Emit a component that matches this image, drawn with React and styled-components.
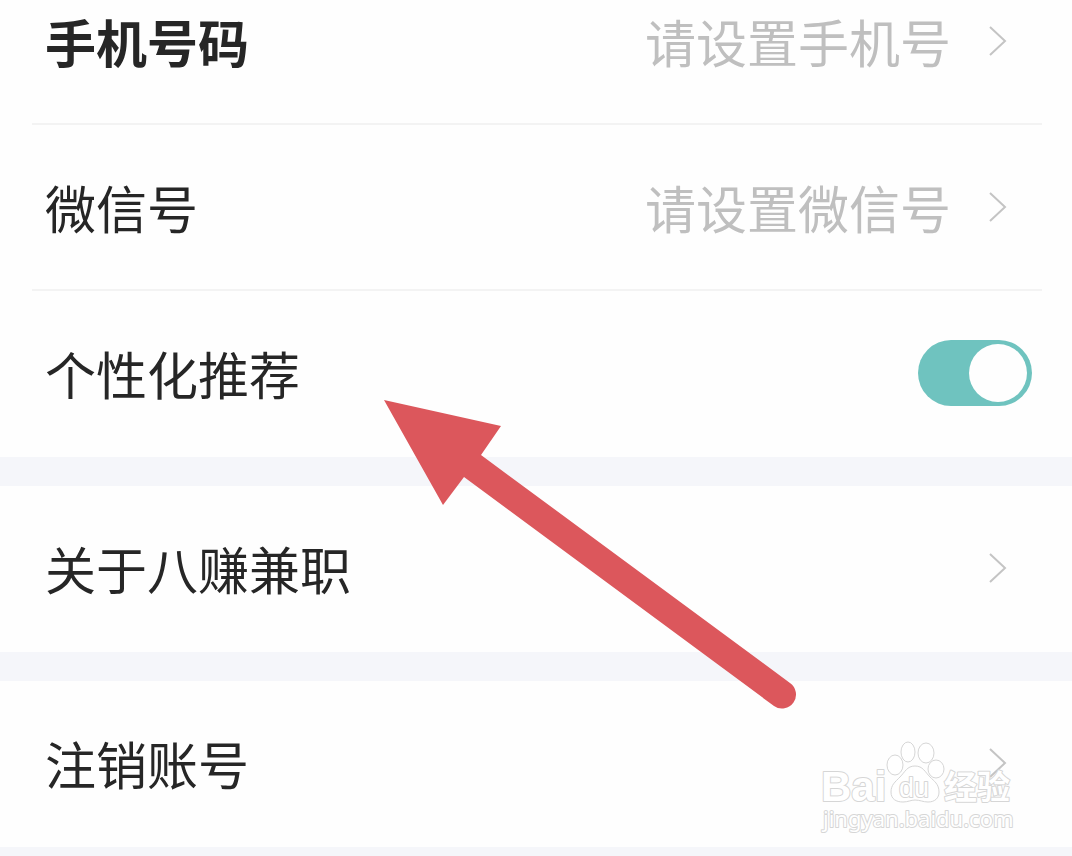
import React, { useState } from "react";
import styled, { createGlobalStyle } from "styled-components";

const GlobalStyle = createGlobalStyle`
  * { box-sizing: border-box; }
  body {
    margin: 0;
    background: #f5f6fa;
    color: #262626;
    font-family: "Noto Sans CJK SC", sans-serif;
  }
`;

const Page = styled.main`
  position: relative;
  display: flex;
  flex-direction: column;
  gap: 29px;
`;

const Group = styled.section`
  background: #fefefe;
  padding: 0 30px 0 32px;
`;

const Row = styled.div`
  display: flex;
  align-items: center;
  width: 100%;
  margin: 0;
  padding-top: ${(p) => (p.$first ? "11px" : "52px")};
  padding-right: ${(p) => (p.$flush ? "10px" : "34px")};
  padding-bottom: ${(p) => (p.$divided ? "52px" : "54px")};
  padding-left: 13px;
  border: 0;
  border-bottom: ${(p) => (p.$divided ? "2px solid #f3f3f3" : "0")};
  background: none;
  color: inherit;
  font-family: inherit;
  font-size: 51px;
  line-height: 60px;
  text-align: left;
  cursor: pointer;
`;

const Label = styled.span`
  flex: 1;
  font-weight: ${(p) => (p.$bold ? 700 : 400)};
`;

const Value = styled.span`
  margin-right: 37px;
  color: #bfbfbf;
`;

const ChevronIcon = styled.svg`
  display: block;
  flex: none;
  width: 20px;
  height: 32px;
  fill: none;
  stroke: #c4c4c4;
  stroke-width: 2;
`;

const Switch = styled.input`
  appearance: none;
  flex: none;
  display: flex;
  align-items: center;
  justify-content: ${(p) => (p.checked ? "flex-end" : "flex-start")};
  width: 114px;
  height: 66px;
  margin: -3px 0;
  padding: 0 5px;
  border-radius: 33px;
  background: ${(p) => (p.checked ? "#6fc3bf" : "#d8d8d8")};
  cursor: pointer;

  &::before {
    content: "";
    width: 58px;
    height: 58px;
    border-radius: 50%;
    background: #fefefe;
  }
`;

const Pointer = styled.svg`
  position: absolute;
  left: 384px;
  top: 400px;
  width: 414px;
  height: 310px;
  fill: #dc575c;
  pointer-events: none;
`;

const Watermark = styled.svg`
  position: absolute;
  right: 52px;
  top: 736px;
  width: 200px;
  height: 100px;
  pointer-events: none;
  fill: #ffffff;
  stroke: #d6d6d6;
  stroke-width: 2;
  stroke-linejoin: round;

  text {
    paint-order: stroke;
  }

  ellipse,
  path {
    stroke-width: 1;
  }
`;

const Wordmark = styled.text`
  font: 700 42px "Liberation Sans", sans-serif;
`;

const Monogram = styled.text`
  font: 400 27px "Liberation Sans", sans-serif;
`;

const Product = styled.text`
  font: 700 33px "Noto Sans CJK SC", sans-serif;
`;

const Domain = styled.text`
  font: 400 22px "Noto Sans", sans-serif;
`;

function Chevron() {
  return (
    <ChevronIcon viewBox="0 0 20 32" aria-hidden="true">
      <path d="M2 2 L17 16 L2 30" />
    </ChevronIcon>
  );
}

function LinkRow({ label, value, bold, first, divided }) {
  return (
    <Row as="button" type="button" $first={first} $divided={divided}>
      <Label $bold={bold}>{label}</Label>
      {value && <Value>{value}</Value>}
      <Chevron />
    </Row>
  );
}

function BaiduMark() {
  return (
    <Watermark viewBox="0 0 200 100">
      <Wordmark x="1" y="65">Bai</Wordmark>
      <ellipse cx="75" cy="29" rx="8" ry="10" />
      <ellipse cx="88" cy="16" rx="7" ry="10" />
      <ellipse cx="106" cy="17" rx="8" ry="10" />
      <ellipse cx="116" cy="33" rx="8" ry="9" />
      <path d="M95 30 C87 30 85 36 80 41 C75 46 71 49 71 56 C71 63 76 66 83 66 C88 66 91 64 95 64 C100 64 103 66 108 66 C115 66 119 62 119 56 C119 48 114 45 110 41 C105 36 103 30 95 30 Z" />
      <Monogram x="79" y="61">du</Monogram>
      <Product x="124" y="63">经验</Product>
      <Domain x="3" y="91">jingyan.baidu.com</Domain>
    </Watermark>
  );
}

export default function App() {
  const [personalised, setPersonalised] = useState(true);

  return (
    <>
      <GlobalStyle />
      <Page>
        <Group>
          <LinkRow label="手机号码" value="请设置手机号" bold first divided />
          <LinkRow label="微信号" value="请设置微信号" divided />
          <Row as="label" htmlFor="personalised" $flush>
            <Label>个性化推荐</Label>
            <Switch
              id="personalised"
              type="checkbox"
              role="switch"
              checked={personalised}
              onChange={(e) => setPersonalised(e.target.checked)}
            />
          </Row>
        </Group>
        <Group>
          <LinkRow label="关于八赚兼职" />
        </Group>
        <Group>
          <LinkRow label="注销账号" />
        </Group>
        <Pointer viewBox="0 0 414 310" aria-hidden="true">
          <path d="M0 0 L117 26 L97 55 L406 283 A14 14 0 0 1 390 306 L80 77 L59 105 Z" />
        </Pointer>
        <BaiduMark />
      </Page>
    </>
  );
}
